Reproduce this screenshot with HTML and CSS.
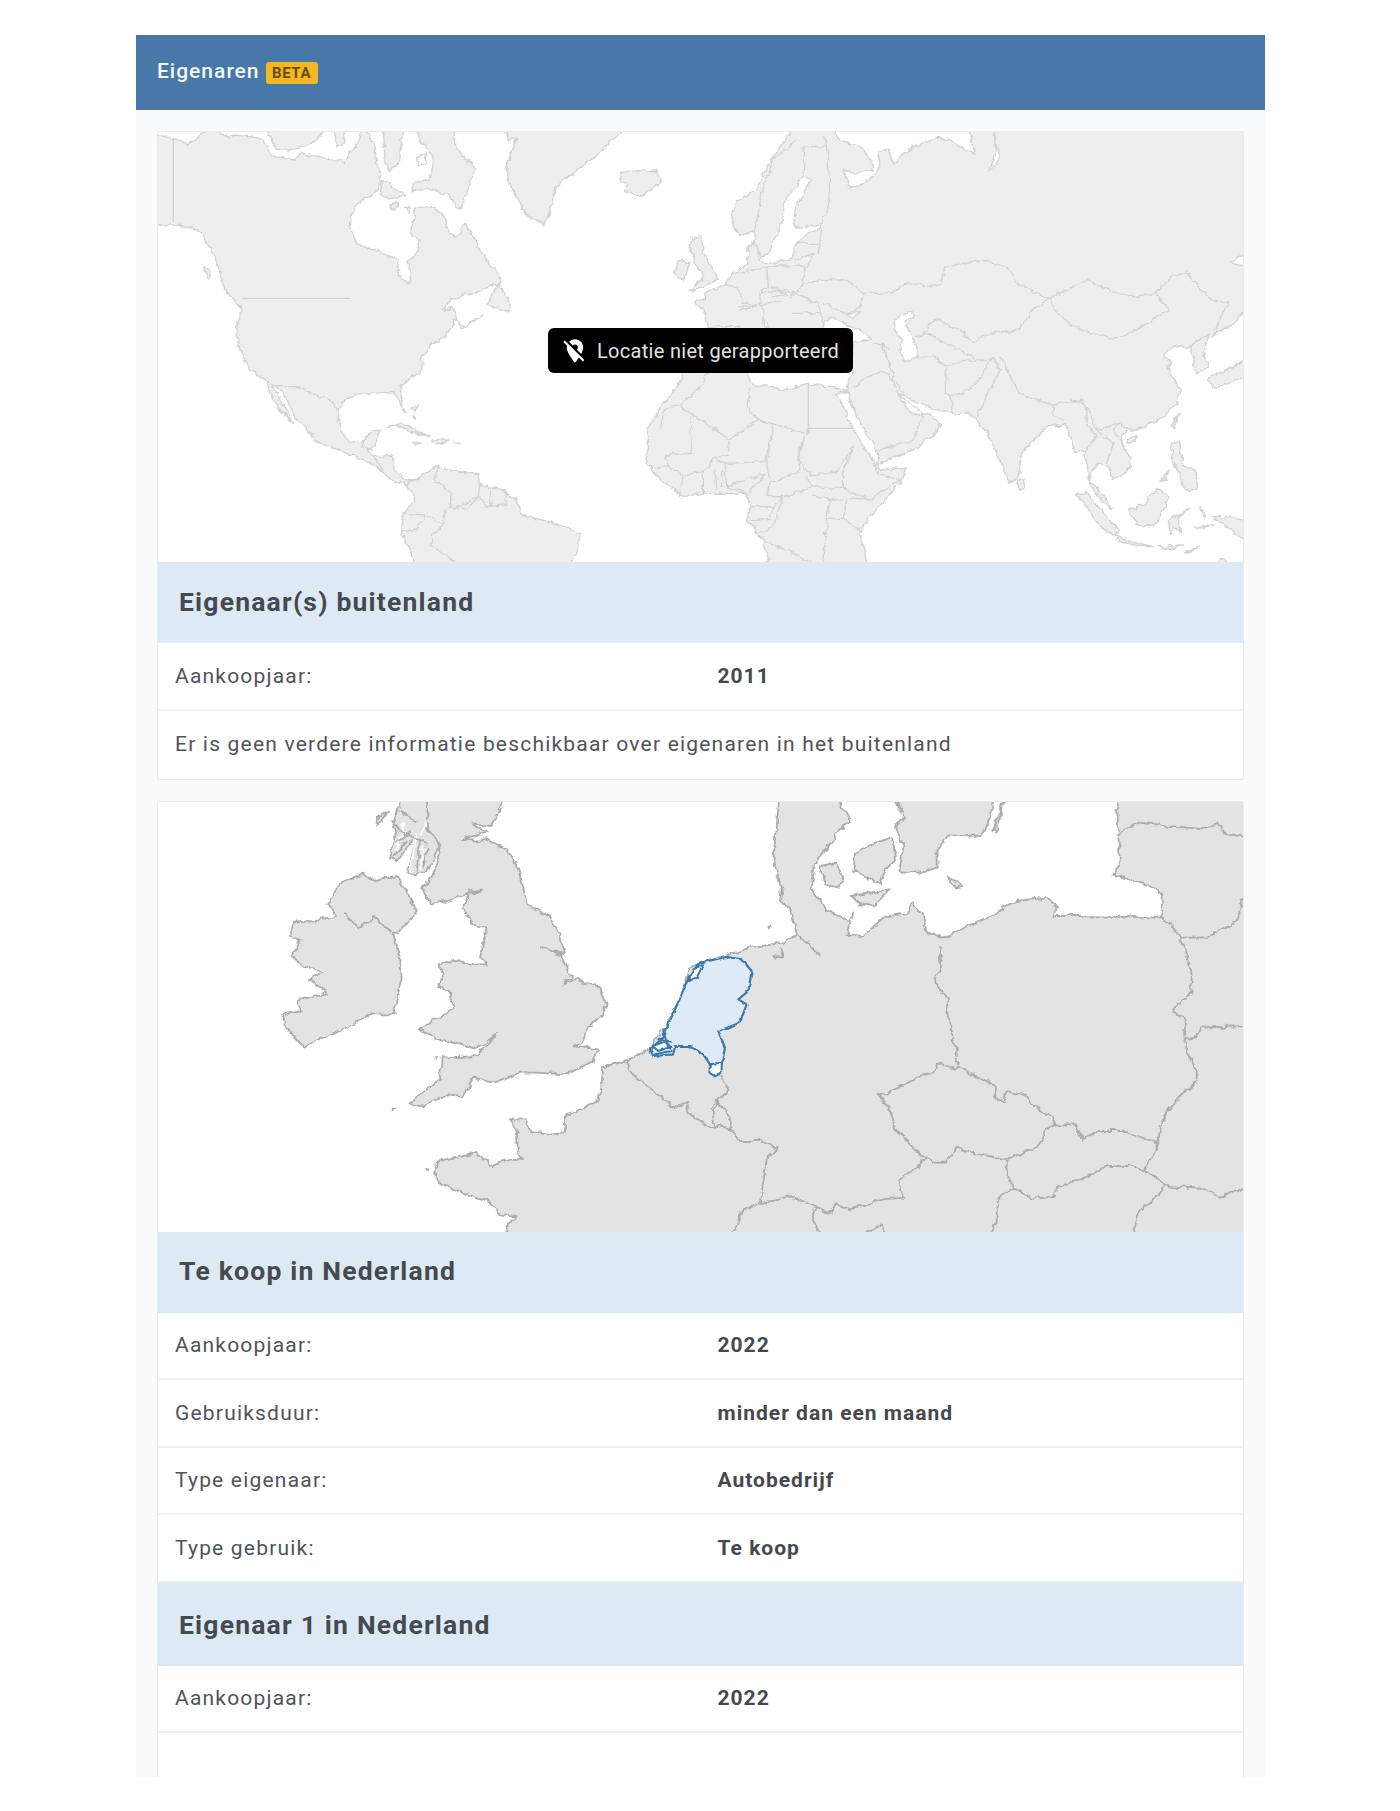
FILE: index.html
```html
<!DOCTYPE html>
<html lang="nl">
<head>
<meta charset="utf-8">
<title>Eigenaren</title>
<link rel="stylesheet" href="styles.css">
</head>
<body>
<section class="panel">
  <header class="panel-head"><span class="panel-title">Eigenaren</span><span class="beta">BETA</span></header>
  <div class="panel-body">
    <article class="card">
      <div class="map-wrap">
        <svg class="map world" viewBox="158 132 1085 430" preserveAspectRatio="none" aria-hidden="true">
          <defs>
            <filter id="roughW" filterUnits="userSpaceOnUse" x="100" y="100" width="1200" height="500" color-interpolation-filters="sRGB">
              <feTurbulence type="fractalNoise" baseFrequency=".13" numOctaves="3" seed="4" result="n"/>
              <feDisplacementMap in="SourceGraphic" in2="n" scale="6" xChannelSelector="R" yChannelSelector="G"/>
              <feGaussianBlur stdDeviation=".45"/>
            </filter>
          </defs>
          <g filter="url(#roughW)">
          <g transform="translate(155 130) scale(.33333)">
            <path class="land" d="M-20,8 L55,25 L100,42 L130,22 L180,-15 L215,25 L240,15 L285,20 L325,28 L352,78 L420,90 L435,70 L490,80 L570,95 L578,78 L610,40 L625,-15 L660,50 L665,100 L682,130 L670,180 L620,210 L590,250 L585,300 L610,345 L660,360 L725,390 L735,440 L760,462 L770,430 L755,395 L790,365 L795,330 L770,310 L782,232 L830,230 L870,260 L880,310 L905,320 L932,280 L970,350 L1000,400 L1030,430 L1035,460 L1010,465 L960,490 L925,495 L885,510 L865,540 L890,530 L905,560 L915,595 L985,555 L930,590 L900,570 L870,620 L830,640 L800,680 L800,720 L770,745 L735,770 L745,840 L755,850 L730,810 L715,785 L650,790 L600,795 L560,815 L550,850 L555,900 L580,935 L625,935 L640,905 L675,900 L660,945 L640,960 L655,980 L715,975 L720,1020 L750,1055 L785,1045 L750,1065 L700,1045 L685,1025 L620,985 L560,965 L480,930 L460,905 L420,860 L385,790 L365,770 L330,750 L285,720 L250,650 L245,590 L262,540 L210,480 L180,380 L130,300 L70,285 L-20,285 Z"/>
            <path class="land" d="M335,755 L350,760 L415,880 L385,850 L350,810 Z"/>
            <path class="land" d="M330,-15 L515,-15 L490,30 L430,55 L360,58 Z"/>
            <path class="land" d="M530,-15 L570,-15 L565,40 L545,50 Z"/>
            <path class="land" d="M685,-15 L740,-15 L735,90 L700,125 L690,100 Z"/>
            <path class="land" d="M770,-15 L895,-15 L900,50 L962,115 L930,200 L915,240 L880,195 L835,180 L775,180 L775,160 L825,150 L838,85 L800,35 Z"/>
            <path class="sea" d="M785,85 L812,68 L812,100 L790,105 Z"/>
            <path class="land" d="M682,150 L750,195 L720,205 L675,200 Z"/>
            <path class="land" d="M705,232 L730,215 L730,232 L715,238 Z"/>
            <path class="land" d="M752,232 L765,232 L762,250 Z"/>
            <path class="land" d="M1045,-15 L1420,-15 L1330,70 L1280,110 L1200,170 L1185,250 L1165,285 L1110,250 L1060,150 L1055,100 L1085,25 L1060,30 Z"/>
            <path class="land" d="M1395,130 L1450,125 L1505,120 L1518,155 L1460,200 L1410,185 L1420,165 L1395,150 Z"/>
            <path class="land" d="M995,525 L1030,460 L1065,515 L1065,545 L1030,535 Z"/>
            <path class="land" d="M145,408 L165,420 L165,445 L150,430 Z"/>
            <path class="land" d="M700,890 L740,880 L790,905 L825,920 L770,905 L720,885 Z"/>
            <path class="land" d="M830,930 L880,930 L860,945 L825,938 Z"/>
            <path class="land" d="M775,937 L800,943 L780,945 Z"/>
            <path class="land" d="M900,937 L920,940 L905,943 Z"/>
            <path class="land" d="M770,830 L790,830 L780,845 Z M775,860 L785,860 L782,870 Z"/>
            <path class="land" d="M755,1065 L790,1040 L850,1010 L880,1020 L975,1035 L975,1065 L1050,1085 L1080,1105 L1100,1155 L1220,1185 L1275,1215 L1270,1260 L1240,1320 L790,1320 L740,1210 L745,1150 L780,1110 Z"/>
            <path class="line" d="M330,750 L370,770 L430,770 L490,800 L515,800 L550,840 M640,910 L620,950 L655,960 M660,985 L690,1030 M850,1010 L840,1050 L890,1090 L890,1130 L870,1140 L865,1185 L835,1215 L825,1245 L880,1280 L925,1320 M975,1060 L970,1100 L895,1135 M985,1130 L1055,1125 L1050,1085 M745,1150 L810,1155 L790,1195 L745,1205 M810,1155 L865,1185 M880,1135 L935,1135 L975,1100 L1000,1135 M1000,1065 L1010,1130"/>
          </g>
          <g transform="translate(640 130) scale(.33333)">
            <path class="land" d="M345,300 L300,320 L280,280 L275,250 L290,215 L345,180 L395,90 L440,25 L470,-15 L570,-15 L600,30 L660,50 L692,90 L695,120 L640,130 L605,115 L630,175 L670,160 L720,115 L715,60 L745,60 L760,100 L820,50 L900,20 L1005,70 L985,-15 L1850,-15 L1850,360 L1770,395 L1850,415 L1850,510 L1812,540 L1770,590 L1730,605 L1690,640 L1640,655 L1615,645 L1570,670 L1595,700 L1585,715 L1620,780 L1610,820 L1560,870 L1490,900 L1465,900 L1440,925 L1470,985 L1470,1015 L1425,1050 L1405,1010 L1370,1000 L1350,1030 L1355,1060 L1400,1110 L1415,1135 L1375,1100 L1350,1065 L1335,965 L1305,965 L1280,880 L1250,890 L1230,880 L1145,970 L1135,1040 L1110,1060 L1075,980 L1050,920 L1010,870 L985,850 L940,850 L880,835 L835,820 L790,795 L775,795 L800,835 L835,860 L860,845 L905,885 L870,925 L815,960 L712,1005 L712,965 L680,910 L650,860 L625,790 L620,770 L635,725 L640,640 L205,640 L205,590 L195,550 L165,515 L195,505 L190,490 L240,470 L255,465 L280,430 L320,405 L325,350 L345,335 L360,395 L395,400 L455,385 L470,345 L485,325 L540,295 L545,280 L480,295 L460,280 L470,230 L510,150 L490,140 L430,220 L425,280 L385,370 L365,385 L345,345 Z"/>
            <path class="sea" d="M1055,-15 L1080,85 L1045,128 L1068,60 Z"/>
            <path class="sea" d="M540,600 L570,560 L610,575 L640,595 L670,605 L695,630 L640,635 Z"/>
            <path class="sea" d="M625,555 L660,545 L640,565 Z"/>
            <path class="sea" d="M785,555 L820,545 L822,560 L795,575 L810,610 L830,650 L832,680 L795,695 L780,660 L785,630 L760,590 L765,565 Z"/>
            <path class="sea" d="M365,565 L390,590 L375,592 Z"/>
            <path class="land" d="M155,325 L185,320 L190,365 L235,450 L150,485 L190,440 L165,400 L150,350 Z"/>
            <path class="land" d="M105,430 L115,395 L150,395 L130,455 Z"/>
            <path class="land" d="M1130,1050 L1150,1050 L1155,1075 L1140,1080 Z"/>
            <path class="land" d="M130,715 L310,715 L340,765 L400,770 L440,780 L500,760 L590,775 L625,785 L590,790 L625,860 L650,920 L705,1000 L720,1020 L800,1015 L780,1060 L690,1160 L660,1210 L685,1320 L390,1320 L370,1230 L320,1170 L330,1130 L320,1090 L190,1090 L130,1100 L50,1040 L15,985 L25,960 L25,890 L60,830 L100,790 L130,730 Z"/>
            <path class="line" d="M555,20 L565,90 L570,200 L545,280 M470,30 L400,90 L365,190 L345,300 M490,50 L490,130 M490,50 L555,50 M545,295 L535,370 M470,340 L535,340 M470,390 L525,370 M490,425 L525,370 M490,460 L580,445 L620,450 L670,490 L660,530 L625,555 L550,520 M380,410 L490,405 L490,460 L470,490 L390,470 M295,430 L380,410 L385,470 L360,490 L360,520 L310,520 L295,470 L255,465 M205,590 L295,590 M300,530 L360,525 L420,515 M400,500 L470,490 L530,520 L550,580 M460,550 L540,550 M360,490 L420,480 L450,500 M300,540 L365,525 L370,565"/>
            <path class="line" d="M670,490 L755,490 L790,460 L900,470 L915,410 L1020,390 L1100,410 L1130,460 L1225,505 L1300,470 L1345,450 L1415,485 L1485,500 L1545,490 L1590,540 M1225,505 L1265,565 L1320,600 L1420,625 L1490,600 L1585,540 M1545,490 L1595,440 L1640,425 L1680,480 L1730,515 L1765,515 L1725,600 M1225,505 L1170,550 L1140,600 L1040,610 L1000,640 L960,600 L880,565 L860,600 L835,620 M725,640 L760,740 L790,790 M830,685 L880,680 L920,710 L915,790 L930,800 L940,850 M920,710 L975,690 L1040,690 L1060,680 L1010,760 L970,790 L930,800 M1060,680 L1080,720 L1040,800 L1020,840 L1010,870 M1080,680 L1140,790 L1240,825 L1290,815 L1330,810 L1370,900 L1440,880 L1465,900 M1240,825 L1240,860 L1270,870 M1290,810 L1335,820 L1340,880 L1370,920 L1340,960 M1370,900 L1420,940 L1400,1000 M1440,880 L1420,900 L1470,985 M640,770 L720,720 L760,750 L770,790 M770,790 L850,850 L820,930 L710,960 M830,620 L860,610 L960,660 L1000,680 M700,640 L725,640 L745,660"/>
            <path class="line" d="M330,770 L325,830 L350,870 M350,870 L395,880 L500,915 L505,895 M200,725 L190,765 L120,825 M60,895 L75,840 L115,825 M120,830 L270,930 L350,870 M150,860 L155,970 L75,975 M270,930 L265,975 L225,985 L255,1000 L375,995 L400,890 M400,890 L380,1000 L390,1060 L480,1025 L470,980 L490,920 M490,920 L475,985 L510,1040 L595,1020 L620,980 L640,950 M640,950 L610,1020 L610,1075 L690,1110 L780,1050 L715,1030 L700,1000 M500,1040 L520,1070 L610,1075 M390,1060 L380,1100 L430,1100 L520,1070 M610,1100 L690,1110 M660,1200 L610,1165 L620,1110 M570,1110 L610,1110 M430,1100 L400,1190 L360,1210 M370,1230 L480,1280 L550,1320 M550,1320 L560,1165 L570,1110 L520,1095 M560,1165 L610,1165 M255,1000 L260,1070 L320,1090 M260,1070 L375,1030 M375,1030 L320,1100 M330,1130 L400,1130 L430,1100 M330,1170 L390,1165 L400,1130 M190,1025 L190,1090 M225,1020 L230,1080 M245,1020 L245,1070 M75,975 L85,1010 L130,1035 L190,1025 L225,985 M50,1015 L85,1010 M130,1035 L120,1090"/>
          </g>
          <g transform="translate(1040 130) scale(.33333)">
            <path class="land" d="M110,1090 L140,1090 L235,1200 L225,1220 L180,1190 Z"/>
            <path class="land" d="M230,1220 L330,1248 L345,1252 L290,1245 L235,1235 Z"/>
            <path class="land" d="M270,1135 L310,1125 L355,1075 L385,1100 L375,1130 L340,1190 L290,1180 L270,1160 Z"/>
            <path class="land" d="M385,1170 L450,1135 L415,1160 L425,1210 L400,1190 L390,1210 Z"/>
            <path class="land" d="M395,940 L420,935 L425,1000 L465,1020 L470,1080 L435,1080 L420,1040 L395,980 Z"/>
            <path class="land" d="M400,885 L415,850 L405,895 Z"/>
            <path class="land" d="M505,745 L640,680 L640,735 L520,775 Z"/>
            <path class="land" d="M450,650 L510,610 L490,660 L505,710 L470,730 Z"/>
            <path class="land" d="M262,930 L285,915 L290,930 L270,940 Z"/>
            <path class="land" d="M360,1055 L390,1020 L375,1050 Z"/>
            <path class="land" d="M355,1250 L430,1245 L390,1258 Z"/>
            <path class="land" d="M435,1270 L480,1245 L450,1268 Z"/>
            <path class="land" d="M480,1130 L495,1160 L485,1160 Z"/>
            <path class="land" d="M520,1160 L560,1160 L640,1175 L640,1250 L555,1185 Z"/>
            <path class="land" d="M510,1320 L545,1285 L590,1320 Z"/>
            <path class="land" d="M465,1190 L520,1185 L480,1195 Z"/>
          </g>
          </g>
          <g transform="translate(155 130) scale(.33333)">
            <path class="line" d="M55,25 L55,275 M265,505 L585,505"/>
          </g>
          <g transform="translate(640 130) scale(.33333)">
            <path class="line" d="M505,760 L505,895 L640,895"/>
          </g>
        </svg>
        <div class="toast">
          <svg class="toast-icon" viewBox="0 0 24 24" aria-hidden="true"><path d="M12 6.5c1.38 0 2.5 1.12 2.5 2.5 0 .74-.33 1.39-.83 1.85l3.63 3.63c.98-1.86 1.7-3.8 1.7-5.48 0-3.87-3.13-7-7-7-1.98 0-3.76.83-5.04 2.15l3.19 3.19c.46-.52 1.11-.84 1.85-.84zm4.37 9.6l-4.63-4.63-.11-.11L3.27 3 2 4.27l3.18 3.18C5.07 7.95 5 8.47 5 9c0 5.25 7 13 7 13s1.67-1.85 3.38-4.35L18.73 21 20 19.73l-3.63-3.63z"/></svg>
          <span>Locatie niet gerapporteerd</span>
        </div>
      </div>
      <h2 class="band">Eigenaar(s) buitenland</h2>
      <div class="row"><span class="label">Aankoopjaar:</span><strong class="value">2011</strong></div>
      <div class="row row-note"><span class="label">Er is geen verdere informatie beschikbaar over eigenaren in het buitenland</span></div>
    </article>

    <article class="card card-cut">
      <div class="map-wrap">
        <svg class="map europe" viewBox="158 801 1085 430" preserveAspectRatio="none" aria-hidden="true">
          <defs>
            <filter id="roughE" filterUnits="userSpaceOnUse" x="100" y="770" width="1200" height="500" color-interpolation-filters="sRGB">
              <feTurbulence type="fractalNoise" baseFrequency=".11" numOctaves="3" seed="9" result="n"/>
              <feDisplacementMap in="SourceGraphic" in2="n" scale="7" xChannelSelector="R" yChannelSelector="G"/>
              <feGaussianBlur stdDeviation=".4"/>
            </filter>
            <filter id="roughN" filterUnits="userSpaceOnUse" x="600" y="930" width="200" height="170" color-interpolation-filters="sRGB">
              <feTurbulence type="fractalNoise" baseFrequency=".16" numOctaves="2" seed="3" result="n"/>
              <feDisplacementMap in="SourceGraphic" in2="n" scale="3.5" xChannelSelector="R" yChannelSelector="G"/>
              <feGaussianBlur stdDeviation=".3"/>
            </filter>
          </defs>
          <g filter="url(#roughE)">
          <g transform="translate(260 800) scale(.33333)">
            <path class="land" d="M100,365 L170,360 L225,345 L205,310 L240,245 L310,215 L345,240 L410,225 L445,280 L470,330 L440,375 L400,400 L420,470 L425,530 L400,640 L330,640 L240,690 L130,735 L75,680 L70,640 L125,630 L110,600 L200,575 L150,540 L190,510 L130,495 L95,465 L120,420 L90,405 Z"/>
            <path class="land" d="M505,-15 L735,-15 L695,75 L640,70 L680,95 L600,115 L680,115 L740,145 L780,210 L800,310 L860,340 L895,390 L915,460 L845,440 L900,460 L935,530 L910,550 L945,535 L1020,560 L1040,610 L1010,660 L985,680 L970,720 L940,735 L1015,745 L1000,780 L920,820 L830,815 L780,815 L700,845 L640,830 L610,885 L560,880 L490,915 L450,905 L480,880 L540,835 L545,770 L650,765 L715,695 L650,745 L590,725 L520,710 L480,680 L580,620 L570,570 L530,555 L550,520 L535,490 L560,480 L650,490 L680,490 L660,470 L680,380 L640,370 L610,320 L630,270 L665,268 L555,300 L510,310 L490,265 L530,200 L540,130 L500,90 Z"/>
            <path class="land" d="M430,-15 L505,-15 L500,80 L540,130 L500,210 L460,220 L445,215 L470,100 L410,180 L390,175 L410,100 L400,60 Z"/>
            <path class="sea-line" d="M470,100 L450,210 M430,70 L410,160 M500,60 L480,100 M490,140 L480,205"/>
            <path class="line" d="M400,60 L430,100 M420,30 L470,60 M440,100 L500,130 M480,120 L470,210 M500,140 L490,200 M400,170 L440,120 M410,130 L450,90"/>
            <path class="land" d="M345,55 L390,30 L355,65 Z"/>
            <path class="land" d="M528,768 L534,770 L530,774 Z M398,922 L405,925 L400,930 Z M493,1100 L505,1103 L497,1106 Z M1525,375 L1532,378 L1526,381 Z"/>
            <path class="land" d="M750,955 L800,955 L810,990 L880,1000 L915,990 L915,950 L1020,895 L1030,795 L1100,780 L1170,740 L1225,670 L1270,570 L1290,500 L1400,465 L1470,440 L1535,430 L1580,420 L1610,400 L1590,320 L1560,300 L1565,265 L1540,180 L1550,40 L1555,-15 L1725,-15 L1770,60 L1720,110 L1665,190 L1655,260 L1700,330 L1770,360 L1780,335 L1760,400 L1810,405 L1870,350 L1940,340 L1960,310 L1990,350 L2000,395 L2050,410 L2200,340 L2270,300 L2360,290 L2390,320 L2380,345 L2450,345 L2700,350 L2710,280 L2690,260 L2590,230 L2560,225 L2580,190 L2570,-15 L3000,-15 L3000,1320 L730,1320 L745,1265 L770,1248 L720,1240 L690,1205 L620,1180 L540,1150 L525,1120 L530,1085 L650,1055 L690,1095 L750,1075 L790,1080 L775,1060 L770,990 Z"/>
            <path class="land" d="M1905,-15 L1930,50 L1905,80 L1930,140 L1918,210 L1980,215 L2030,200 L2030,150 L2070,100 L2160,105 L2190,50 L2205,-15 Z"/>
            <path class="land" d="M1785,160 L1840,130 L1900,110 L1905,180 L1880,200 L1860,250 L1820,230 L1780,210 Z"/>
            <path class="land" d="M1680,195 L1730,185 L1750,230 L1735,260 L1695,250 Z"/>
            <path class="land" d="M1775,285 L1890,265 L1840,315 L1800,310 Z"/>
            <path class="land" d="M2070,225 L2105,260 L2090,265 L2070,245 Z"/>
            <path class="land" d="M2200,90 L2235,-15 L2210,95 Z"/>
            <path class="line" d="M250,335 L300,380 L345,350 L400,400 M1100,780 L1120,825 L1180,870 L1240,920 L1280,900 L1290,940 L1340,975 L1360,975 L1410,985 M1380,820 L1405,870 L1370,900 L1415,945 L1410,985 M1360,975 L1355,930 L1375,900 M1410,985 L1440,1020 L1500,1020 L1550,1040 L1520,1080 L1500,1205 L1555,1200 M1500,1205 L1450,1225 L1410,1320 M1610,400 L1640,420 L1680,465 M1540,465 L1570,470 L1560,440"/>
            <path class="line" d="M2040,440 L2040,500 L2025,545 L2060,590 L2070,680 L2090,750 L2090,800 L2030,790 L2030,805 L1880,875 L1855,880 L1890,930 L1910,990 L1990,1065 L2020,1085 L2060,1085 L2090,1040 L2160,1060 L2240,1075 L2330,1040 L2360,985 L2390,970 M2090,795 L2200,850 L2210,895 L2230,900 L2240,870 L2300,885 L2320,915 L2375,945 L2390,970 L2440,970 L2470,1015 L2510,990 L2600,990 L2695,1030 M2240,1075 L2240,1120 L2260,1160 L2320,1190 L2380,1185 L2390,1160 L2470,1130 L2540,1095 L2610,1095 L2655,1110 L2695,1030 L2700,970 L2750,900 L2810,840 L2810,810 L2775,740 L2770,650 L2740,625 L2795,570 L2795,520 L2760,400 L2705,350 M2570,100 L2640,65 L2730,75 L2830,85 L2870,65 L2890,95 L2960,110 M2770,410 L2840,410 L2930,365 L2950,290 M2775,715 L2805,710 L2825,680 L2960,675 M2655,1110 L2720,1155 L2840,1165 L2880,1190 L2910,1170 L2960,1165 M2720,1155 L2640,1230 L2610,1320 M2260,1160 L2210,1200 L2210,1260 L2180,1320 M1995,1070 L1970,1100 L1915,1135 L1930,1190 L1870,1195 L1770,1225 L1725,1210 L1710,1240 L1665,1215 L1580,1185 L1500,1210 M1670,1215 L1655,1260 L1700,1320 M1775,1320 L1870,1270 L1875,1320"/>
          </g>
          </g>
          <g filter="url(#roughN)">
          <g transform="translate(260 800) scale(.33333)">
            <path class="nl" d="M1285,530 L1320,485 L1400,468 L1445,475 L1475,510 L1465,570 L1435,595 L1460,610 L1440,665 L1375,690 L1395,740 L1385,790 L1350,790 L1330,760 L1290,735 L1245,735 L1240,760 L1180,765 L1170,745 L1210,710 L1225,670 L1270,570 Z"/>
            <path class="nl-sea" d="M1285,540 L1300,505 L1330,490 L1310,530 Z"/>
            <path class="nl-sea" d="M1350,790 L1385,785 L1385,815 L1365,826 L1348,815 Z"/>
            <path class="nl-sea" d="M1178,735 L1215,722 L1232,738 L1195,750 Z"/>
            <path class="nl-line" d="M1210,690 L1225,740 M1195,715 L1235,725 M1185,760 L1235,750"/>
          </g>
          </g>
        </svg>
      </div>
      <h2 class="band">Te koop in Nederland</h2>
      <div class="row"><span class="label">Aankoopjaar:</span><strong class="value">2022</strong></div>
      <div class="row"><span class="label">Gebruiksduur:</span><strong class="value">minder dan een maand</strong></div>
      <div class="row"><span class="label">Type eigenaar:</span><strong class="value">Autobedrijf</strong></div>
      <div class="row"><span class="label">Type gebruik:</span><strong class="value">Te koop</strong></div>
      <h2 class="band band-tall">Eigenaar 1 in Nederland</h2>
      <div class="row"><span class="label">Aankoopjaar:</span><strong class="value">2022</strong></div>
      <div class="row-blank"></div>
    </article>
  </div>
</section>
</body>
</html>
```
FILE: styles.css
```css
html, body { margin: 0; padding: 0; background: #fff; }
body {
  height: 1811px;
  overflow: hidden;
  font-family: Roboto, "Liberation Sans", sans-serif;
  color: #4c5156;
}
.panel {
  width: 1129px;
  height: 1742px;
  margin: 35px 0 0 136px;
  background: #fafbfc;
  overflow: hidden;
}
.panel-head {
  height: 75px;
  box-sizing: border-box;
  padding: 0 21px 4px;
  display: flex;
  align-items: center;
  gap: 6px;
  background: #4878a8;
}
.panel-title {
  font-size: 21px;
  font-weight: 500;
  letter-spacing: 1px;
  color: #f3f6f8;
}
.beta {
  width: 52px;
  height: 22px;
  margin-top: 4px;
  display: flex;
  align-items: center;
  justify-content: center;
  border-radius: 3px;
  background: #f2b824;
  color: #6a4a08;
  font-size: 15px;
  font-weight: 700;
  letter-spacing: .6px;
}
.panel-body {
  padding: 21px;
  display: flex;
  flex-direction: column;
  gap: 21px;
}
.card {
  background: #fff;
  border: 1px solid #e8ecef;
  border-radius: 2px;
}
.card-cut { border-bottom: 0; }
.map-wrap { position: relative; height: 430px; }
.map { display: block; width: 100%; height: 100%; }
.land, .sea, .line, .sea-line, .nl, .nl-sea, .nl-line {
  vector-effect: non-scaling-stroke;
  stroke-linejoin: round;
  stroke-linecap: round;
}
.line, .nl-line, .sea-line { fill: none; }
.sea, .nl-sea { fill: #fff; }
.sea-line { stroke: #fff; stroke-width: 2; }
.world .land { fill: #eeeeee; stroke: #d2d2d2; stroke-width: 1.4; }
.world .line, .world .sea { stroke: #d2d2d2; stroke-width: 1.3; }
.europe .land { fill: #e3e3e3; stroke: #acacac; stroke-width: 1.8; }
.europe .line { stroke: #acacac; stroke-width: 1.8; }
.nl { fill: #deebf7; stroke: #3b78ac; stroke-width: 2.2; }
.nl-sea, .nl-line { stroke: #3b78ac; stroke-width: 2; }
.toast {
  position: absolute;
  left: 390px;
  top: 196px;
  width: 305px;
  height: 45px;
  box-sizing: border-box;
  padding-left: 13px;
  display: flex;
  align-items: center;
  gap: 8px;
  background: #000;
  border-radius: 6px;
  color: #e2e2e2;
  font-size: 20px;
  letter-spacing: .3px;
}
.toast-icon { width: 28px; height: 28px; fill: #fff; flex: none; }
.band {
  margin: 0;
  height: 81px;
  box-sizing: border-box;
  padding: 0 21px 3px;
  display: flex;
  align-items: center;
  background: #deeaf3;
  color: #434a51;
  font-size: 26.5px;
  font-weight: 700;
  letter-spacing: 1.2px;
}
.band-tall { height: 83px; padding-bottom: 0; }
.row {
  height: 67.5px;
  box-sizing: border-box;
  display: grid;
  grid-template-columns: 1fr 1fr;
  align-items: center;
  border-bottom: 2px solid #eef1f3;
}
.row-note {
  display: block;
  height: 68px;
  line-height: 66px;
  border-bottom: 0;
}
.row-blank { height: 60px; }
.label, .value { padding: 0 17px; font-size: 21px; }
.label { font-weight: 400; letter-spacing: 1.2px; color: #4f5458; }
.value { font-weight: 700; letter-spacing: 1px; color: #45494e; }
```
